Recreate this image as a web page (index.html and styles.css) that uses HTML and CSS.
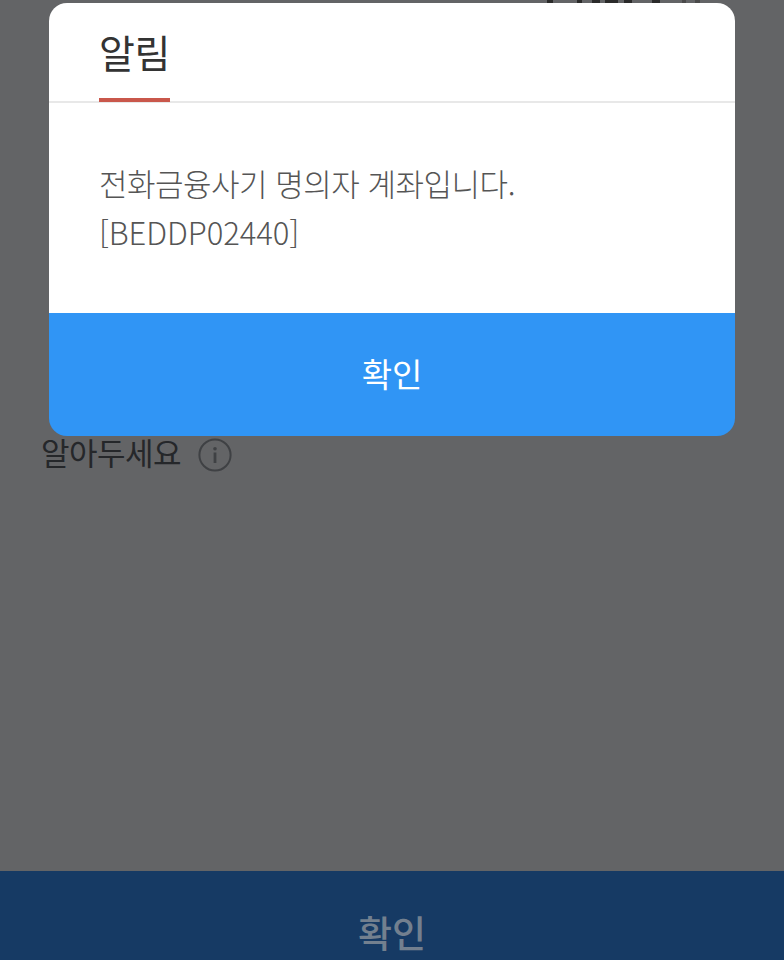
FILE: index.html
```html
<!DOCTYPE html>
<html lang="ko">
<head>
<meta charset="utf-8">
<title>알림</title>
<link rel="stylesheet" href="styles.css">
</head>
<body>
<div class="page">
  <div class="top-strip"></div>
  <div class="hint-row">
    <span class="hint">알아두세요</span>
    <svg class="info" viewBox="0 0 34 34" width="34" height="34" aria-hidden="true">
      <circle cx="17" cy="17" r="15.6" fill="none" stroke="#3f4144" stroke-width="2"/>
      <circle cx="17" cy="10.8" r="1.8" fill="#3f4144"/>
      <rect x="15.6" y="14.5" width="2.8" height="10.5" fill="#3f4144"/>
    </svg>
  </div>
  <div class="footer-btn">확인</div>
</div>
<div class="modal">
  <div class="modal-head"><h1 class="modal-title">알림</h1></div>
  <div class="modal-body">
    <p class="line">전화금융사기 명의자 계좌입니다.</p>
    <p class="line code">[BEDDP02440]</p>
  </div>
  <div class="modal-btn">확인</div>
</div>
</body>
</html>
```
FILE: styles.css
```css
* { box-sizing: border-box; }
html, body { margin: 0; padding: 0; }
body {
  width: 784px;
  height: 960px;
  overflow: hidden;
  position: relative;
  background: #636466;
  font-family: "Noto Sans CJK KR", "Noto Sans", sans-serif;
}
.page {
  height: 960px;
  display: flex;
  flex-direction: column;
}
.top-strip {
  height: 3px;
  flex: none;
  margin-bottom: 431px;
  background: linear-gradient(90deg,
    transparent 547px, #2a2a2a 547px, #2a2a2a 553px, transparent 553px,
    transparent 577px, #2a2a2a 577px, #2a2a2a 582px, transparent 582px,
    transparent 592px, #2a2a2a 592px, #2a2a2a 600px, transparent 600px,
    transparent 605px, #2a2a2a 605px, #2a2a2a 618px, transparent 618px,
    transparent 624px, #2a2a2a 624px, #2a2a2a 632px, transparent 632px,
    transparent 652px, #2a2a2a 652px, #2a2a2a 660px, transparent 660px,
    transparent 682px, #4a4a4a 682px, #4a4a4a 686px, transparent 686px,
    transparent 695px, #4a4a4a 695px, #4a4a4a 700px, transparent 700px);
}
.hint-row {
  display: flex;
  align-items: center;
  gap: 17px;
  padding-left: 41px;
  height: 42px;
}
.hint {
  font-size: 31px;
  line-height: 42px;
  padding-bottom: 6px;
  color: #25272a;
  letter-spacing: -0.5px;
}
.footer-btn {
  margin-top: auto;
  height: 89px;
  background: #163a64;
  color: #73808f;
  font-size: 37px;
  font-weight: 500;
  line-height: 122px;
  text-align: center;
  overflow: hidden;
}
.modal {
  position: absolute;
  left: 49px;
  top: 3px;
  width: 686px;
  height: 433px;
  border-radius: 18px;
  overflow: hidden;
  display: flex;
  flex-direction: column;
}
.modal-head {
  height: 100px;
  padding-left: 50px;
  background: #fff;
  border-bottom: 2px solid #e8e8e8;
  flex: none;
}
.modal-title {
  margin: 0;
  display: inline-block;
  width: 71px;
  height: 99px;
  border-bottom: 4px solid #c9574b;
  font-size: 39px;
  font-weight: 400;
  line-height: 96px;
  color: #333;
  white-space: nowrap;
  letter-spacing: -0.5px;
}
.modal-body {
  flex: 1;
  background: #fff;
  padding: 55px 50px 0;
}
.line {
  margin: 0;
  font-size: 31px;
  line-height: 49px;
  font-weight: 300;
  color: #555;
  letter-spacing: -0.5px;
}
.code { letter-spacing: -0.05px; }
.modal-btn {
  height: 123px;
  flex: none;
  background: #3095f5;
  color: #fff;
  font-size: 33px;
  line-height: 120px;
  text-align: center;
}
```
